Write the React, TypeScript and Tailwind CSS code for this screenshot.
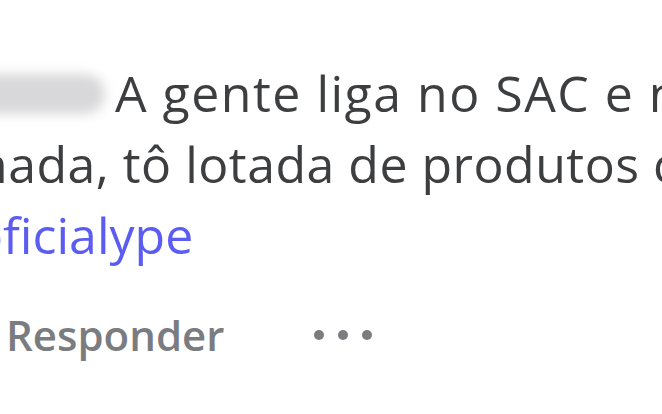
export default function App() {
  return (
    <div className="w-[662px] h-[414px] overflow-hidden bg-white" style={{ fontFamily: '"Open Sans", "Noto Sans", sans-serif' }}>
      <div className="ml-[-27px] pt-[58px] whitespace-nowrap text-[50px] leading-[71px] text-[#3d3e40]">
        {/* comment body */}
        <div className="flex items-center tracking-[1.5px]">
          <span className="shrink-0 w-[132px] h-[40px] rounded-full bg-[#d8d8da] blur-[6px]"></span>
          <span className="ml-[10px]">A gente liga no SAC e não resolve</span>
        </div>
        <div className="pl-[4px] tracking-[0.5px]">nada, tô lotada de produtos com defeito</div>
        <div className="text-[#5b5cf2]">oficialype</div>
      </div>

      {/* actions */}
      <div className="mt-[36px] ml-[6px] flex items-center leading-[56px] text-[42px] font-semibold text-[#7a7c80]">
        <span>Responder</span>
        <div className="ml-[90px] flex items-center gap-[14px]">
          <span className="w-[10px] h-[10px] rounded-full bg-[#7a7c80]"></span>
          <span className="w-[10px] h-[10px] rounded-full bg-[#7a7c80]"></span>
          <span className="w-[10px] h-[10px] rounded-full bg-[#7a7c80]"></span>
        </div>
      </div>
    </div>
  );
}
